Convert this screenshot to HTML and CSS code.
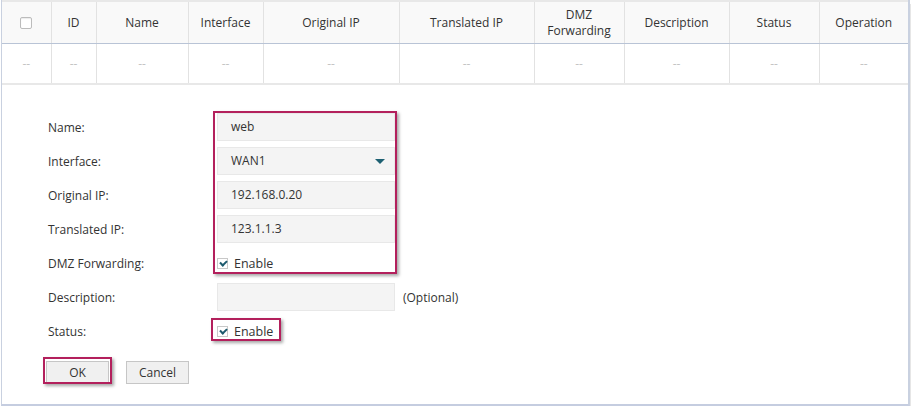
FILE: index.html
```html
<!DOCTYPE html>
<html lang="en">
<head>
  <meta charset="UTF-8" />
  <title>One-to-One NAT</title>
  <link rel="stylesheet" href="styles.css">
</head>
<body>
  <div class="frame">
    <table class="grid">
      <colgroup>
        <col class="c-check"><col class="c-id"><col class="c-name"><col class="c-iface"><col class="c-ip">
        <col class="c-ip2"><col class="c-dmz"><col class="c-desc"><col class="c-status"><col>
      </colgroup>
      <thead>
        <tr>
          <th><span class="box"></span></th>
          <th>ID</th>
          <th>Name</th>
          <th>Interface</th>
          <th>Original IP</th>
          <th>Translated IP</th>
          <th>DMZ<br>Forwarding</th>
          <th>Description</th>
          <th>Status</th>
          <th>Operation</th>
        </tr>
      </thead>
      <tbody>
        <tr>
          <td>--</td><td>--</td><td>--</td><td>--</td><td>--</td>
          <td>--</td><td>--</td><td>--</td><td>--</td><td>--</td>
        </tr>
      </tbody>
    </table>

    <form class="editor">
      <div class="row">
        <label>Name:</label>
        <div class="field">web</div>
      </div>
      <div class="row">
        <label>Interface:</label>
        <div class="field select">WAN1<span class="caret"></span></div>
      </div>
      <div class="row">
        <label>Original IP:</label>
        <div class="field">192.168.0.20</div>
      </div>
      <div class="row">
        <label>Translated IP:</label>
        <div class="field">123.1.1.3</div>
      </div>
      <div class="row">
        <label>DMZ Forwarding:</label>
        <div class="check"><span class="tick"></span>Enable</div>
      </div>
      <div class="row">
        <label>Description:</label>
        <div class="field"></div>
        <span class="hint">(Optional)</span>
      </div>
      <div class="row">
        <label>Status:</label>
        <div class="check"><span class="tick"></span>Enable</div>
      </div>
      <div class="actions">
        <button type="button" class="btn ok">OK</button>
        <button type="button" class="btn">Cancel</button>
      </div>

      <!-- annotation marks -->
      <div class="mark mark-fields"></div>
      <div class="mark mark-status"></div>
      <div class="mark mark-ok"></div>
    </form>
  </div>
</body>
</html>
```

FILE: styles.css
```css
body {
  margin: 0;
  background: #fff;
  font-family: "Open Sans", "Segoe UI", sans-serif;
  font-size: 12px;
  color: #333;
}

.frame {
  margin-left: 1px;
  width: 906px;
  height: 404px;
  border-left: 1px solid #c9d1e0;
  border-right: 2px solid #c9d1e0;
  border-bottom: 2px solid #c5cde0;
  box-shadow: 2px 3px 0 -1px #e6e6e6;
}

/* Table */
.grid {
  width: 100%;
  border-collapse: collapse;
  table-layout: fixed;
}

.c-check { width: 49px; }
.c-id { width: 45px; }
.c-name { width: 92px; }
.c-iface { width: 75px; }
.c-ip { width: 136px; }
.c-ip2 { width: 135px; }
.c-dmz { width: 90px; }
.c-desc { width: 105px; }
.c-status { width: 90px; }

.grid th {
  height: 41px;
  padding: 0;
  background: #f9f9f9;
  border-top: 2px solid #e8e8e8;
  border-left: 1px solid #e2e2e2;
  border-bottom: 1px solid #b9c4d6;
  font-weight: normal;
  line-height: 16px;
  color: #333;
}

.grid th:first-child,
.grid td:first-child {
  border-left: none;
}

.grid td {
  height: 39px;
  padding: 0;
  text-align: center;
  color: #c4c4c4;
  border-left: 1px solid #e2e2e2;
  border-bottom: 2px solid #e8e8e8;
}

.box {
  display: inline-block;
  width: 10px;
  height: 10px;
  border: 1px solid #bcbcbc;
  border-radius: 2px;
  background: #fff;
  vertical-align: middle;
  box-shadow: inset 0 1px 1px rgba(0, 0, 0, 0.08);
}

/* Form */
.editor {
  position: relative;
  padding: 28px 0 0 46px;
}

.row {
  display: flex;
  align-items: center;
  height: 28px;
  margin-bottom: 6px;
}

.row label {
  width: 169px;
}

.field {
  position: relative;
  box-sizing: border-box;
  width: 178px;
  height: 28px;
  line-height: 26px;
  padding-left: 13px;
  background: #f4f4f4;
  border: 1px solid #e8e8e8;
}

.caret {
  position: absolute;
  right: 9px;
  top: 11px;
  width: 0;
  height: 0;
  border-left: 5px solid transparent;
  border-right: 5px solid transparent;
  border-top: 5px solid #1d6072;
}

.hint {
  margin-left: 8px;
}

.check {
  display: flex;
  align-items: center;
  gap: 6px;
  font-size: 12.5px;
}

.tick {
  position: relative;
  width: 9px;
  height: 9px;
  border: 1px solid #c8c8c8;
  background: #fff;
}

.tick::after {
  content: "";
  position: absolute;
  left: 2px;
  top: 1px;
  width: 5px;
  height: 3px;
  border-left: 2px solid #1d5a6e;
  border-bottom: 2px solid #1d5a6e;
  transform: rotate(-45deg);
}

.actions {
  display: flex;
  gap: 17px;
  margin-left: -2px;
  padding-top: 10px;
}

.btn {
  width: 63px;
  height: 23px;
  padding: 0;
  font-family: inherit;
  font-size: 12px;
  color: #333;
  background: #f0f0f0;
  border: 1px solid #c6c6c6;
}

/* Annotation frames */
.mark {
  position: absolute;
  border: 2px solid #b3205c;
  box-shadow: 2px 2px 3px rgba(0, 0, 0, 0.35);
}

.mark-fields {
  left: 211px;
  top: 26px;
  width: 180px;
  height: 159px;
}

.mark-status {
  left: 209px;
  top: 233px;
  width: 66px;
  height: 19px;
}

.mark-ok {
  left: 41px;
  top: 272px;
  width: 65px;
  height: 23px;
}
```
